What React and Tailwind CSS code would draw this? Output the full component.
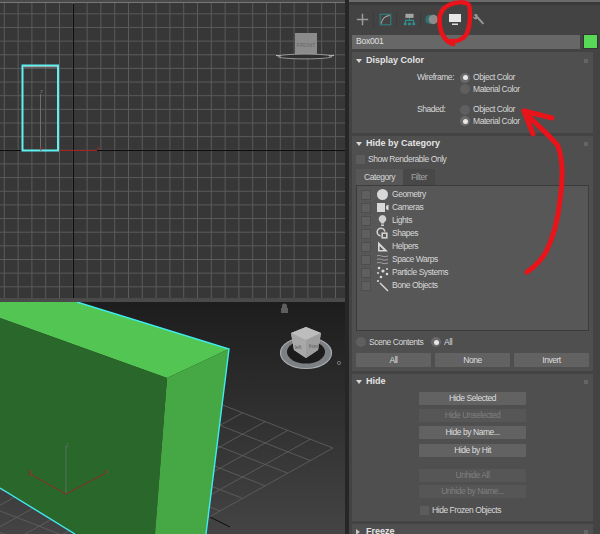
const font = { fontFamily: '"Liberation Sans", Arial, sans-serif' }

const range = (from, to) => Array.from({ length: to - from + 1 }, (_, i) => from + i)

const FrontViewport = () => (
  <svg width="345" height="295" viewBox="0 3 345 295" className="block bg-[#373737]">
    {range(-6, 20).map(k => (
      <line key={k} x1={73.3 + k * 13.8} y1="3" x2={73.3 + k * 13.8} y2="298" stroke="#5b5b5b" strokeWidth="1" />
    ))}
    {range(-11, 11).map(k => (
      <line key={k} x1="0" y1={150.3 + k * 13.65} x2="345" y2={150.3 + k * 13.65} stroke="#5b5b5b" strokeWidth="1" />
    ))}
    <line x1="73.5" y1="4" x2="73.5" y2="298" stroke="#0c0c0c" />
    <line x1="0" y1="150.5" x2="345" y2="150.5" stroke="#0c0c0c" />
    <rect x="22.5" y="65.5" width="35.5" height="85" fill="none" stroke="#5ff0f2" strokeWidth="2" />
    <line x1="24" y1="66.8" x2="57" y2="66.8" stroke="#c9c9c9" strokeWidth="0.8" />
    <line x1="40.5" y1="94" x2="40.5" y2="150" stroke="#6f6f6f" />
    <line x1="59" y1="150.5" x2="97" y2="150.5" stroke="#a82020" strokeWidth="1.2" />
    <text x="41.5" y="93" fontSize="5" textAnchor="middle" fill="#7c7c7c" style={font}>z</text>
    <text x="41.5" y="150" fontSize="6" textAnchor="middle" fill="#b02525" style={font}>y</text>
    <text x="98" y="150" fontSize="6" textAnchor="middle" fill="#b02525" style={font}>x</text>
    {/* view cube */}
    <rect x="295" y="33" width="22" height="22" fill="#8b8b8b" />
    <text x="306" y="46.5" fontSize="5.5" textAnchor="middle" fill="#666" style={font}>FRONT</text>
    <ellipse cx="305" cy="56.5" rx="27" ry="2.4" fill="#2f2f2f" stroke="#a0a0a0" strokeWidth="0.9" />
    <line x1="276" y1="55.5" x2="281" y2="56" stroke="#c4c4c4" />
    <line x1="329" y1="56" x2="334" y2="55.5" stroke="#c4c4c4" />
  </svg>
)

const PerspectiveViewport = () => {
  const corner = [333, 448]
  const u = [-22.6, -8.8]
  const v = [-22.6, 12.6]
  const pt = (a, b) => [corner[0] + a * u[0] + b * v[0], corner[1] + a * u[1] + b * v[1]]
  return (
    <svg width="345" height="232" viewBox="0 302 345 232" className="block">
      <defs>
        <linearGradient id="bg" x1="0" y1="0" x2="0" y2="1">
          <stop offset="0" stopColor="#1d1d1d" />
          <stop offset="1" stopColor="#444444" />
        </linearGradient>
      </defs>
      <rect x="0" y="302" width="345" height="232" fill="url(#bg)" />
      {range(0, 16).map(a => {
        const [x1, y1] = pt(a, 0)
        const [x2, y2] = pt(a, 12)
        return <line key={a} x1={x1} y1={y1} x2={x2} y2={y2} stroke="#626262" strokeWidth="0.8" />
      })}
      {range(0, 12).map(b => {
        const [x1, y1] = pt(0, b)
        const [x2, y2] = pt(16, b)
        return <line key={b} x1={x1} y1={y1} x2={x2} y2={y2} stroke="#626262" strokeWidth="0.8" />
      })}
      <line x1="210" y1="517" x2="230" y2="527" stroke="#0c0c0c" />
      {/* box */}
      <polygon points="0,302 77,302 229,349 167,378 0,318" fill="#52c552" />
      <polygon points="167,378 229,349 206,534 155,534" fill="#45a845" />
      <polygon points="0,318 167,378 155,534 76,534 0,488" fill="#2a672a" />
      <polyline points="77,302 229,349 206,534" fill="none" stroke="#3fecef" strokeWidth="1.4" />
      <line x1="0" y1="488" x2="75" y2="534" stroke="#3fecef" strokeWidth="1.4" />
      {/* tripod */}
      <line x1="66" y1="494" x2="66" y2="446" stroke="#4d6f4d" strokeWidth="1.4" />
      <line x1="66" y1="494" x2="30" y2="474" stroke="#8f2a22" />
      <line x1="66" y1="494" x2="104" y2="474" stroke="#8f2a22" />
      <text x="67" y="447" fontSize="7" textAnchor="middle" fill="#5d6b5d" style={font}>z</text>
      <text x="30" y="474" fontSize="7" textAnchor="middle" fill="#a22a22" style={font}>y</text>
      <text x="106" y="474" fontSize="7" textAnchor="middle" fill="#a22a22" style={font}>x</text>
      {/* view cube */}
      <path d="M282 308h5v-2a2.500 2.500 0 0 0-5 0zM281 308h7v5h-7z" fill="#5e5e5e" />
      <ellipse cx="306" cy="353" rx="25.500" ry="15.500" fill="#7c8084" stroke="#a9adb1" strokeWidth="1.200" />
      <ellipse cx="306" cy="352" rx="19" ry="11.500" fill="#1c1c1c" />
      <polygon points="306,327 321,333 318,350 306,358 294,350 291,333" fill="#b8b8b8" />
      <polygon points="306,327 321,333 306,340 291,333" fill="#bdbdbd" />
      <polygon points="291,333 306,340 306,358 294,350" fill="#a8a8a8" />
      <polygon points="321,333 306,340 306,358 318,350" fill="#9d9d9d" />
      <text x="298" y="349" fontSize="5" textAnchor="middle" fill="#5a5a5a" style={font}>left</text>
      <text x="314" y="348" fontSize="5" textAnchor="middle" fill="#5a5a5a" style={font}>front</text>
      <circle cx="339" cy="363" r="1.600" fill="none" stroke="#777" />
    </svg>
  )
}

const Radio = ({ on }) => (
  <span className={`w-[10px] h-[10px] rounded-full flex items-center justify-center shrink-0 ${on ? 'bg-[#6a6a6a]' : 'bg-[#5f5f5f]'}`}>
    {on && <span className="w-[5px] h-[5px] rounded-full bg-[#e8e8e8]" />}
  </span>
)

const Check = () => <span className="w-[9px] h-[9px] bg-[#5c5c5c] shrink-0 block" />

const RolloutHeader = ({ title, open = true }) => (
  <div className="flex items-center h-[15px] pl-[4px] pr-[5px] tracking-normal">
    {open ? (
      <span className="w-0 h-0 border-l-[3px] border-r-[3px] border-t-[4px] border-l-transparent border-r-transparent border-t-[#d5d5d5]" />
    ) : (
      <span className="w-0 h-0 border-t-[3px] border-b-[3px] border-l-[4px] border-t-transparent border-b-transparent border-l-[#c5c5c5]" />
    )}
    <span className={`${open ? 'ml-[4px]' : 'ml-[6px]'} font-bold text-[9px] text-[#e4e4e4]`}>{title}</span>
    <span className="ml-auto w-[4px] h-[4px] bg-[#656565]" />
  </div>
)

const ToolSep = () => <span className="w-px h-[17px] bg-[#3c3c3c] ml-[4px]" />

const Toolbar = () => (
  <div className="flex items-center h-[29px] pl-[7px]">
    <svg width="13" height="13" viewBox="0 0 16 16" stroke="#9c9c9c" strokeWidth="1.800"><path d="M8 1v14M1 8h14" /></svg>
    <ToolSep />
    <svg width="13" height="13" viewBox="0 0 16 16" fill="none" className="ml-[5px]">
      <rect x="1.500" y="1.500" width="13" height="13" stroke="#2f7f80" strokeWidth="1.400" />
      <path d="M3 13C3.500 7 8 3.500 13 3" stroke="#b5b5b5" strokeWidth="1.300" />
    </svg>
    <ToolSep />
    <svg width="13" height="13" viewBox="0 0 16 16" fill="none" className="ml-[6px]">
      <rect x="3" y="1" width="10" height="5" fill="#a5a5a5" />
      <path d="M8 6v3M3 13V9h10v4" stroke="#2f8f90" strokeWidth="1.400" />
      <rect x="1" y="12" width="3.500" height="3" fill="#2f8f90" />
      <rect x="6.200" y="12" width="3.500" height="3" fill="#2f8f90" />
      <rect x="11.500" y="12" width="3.500" height="3" fill="#2f8f90" />
    </svg>
    <ToolSep />
    <svg width="13" height="13" viewBox="0 0 16 16" className="ml-[4px]">
      <circle cx="6" cy="8" r="5.800" fill="#2f6f70" />
      <circle cx="10.200" cy="8" r="5.800" fill="#8c8c8c" />
    </svg>
    <svg width="14" height="13" viewBox="0 0 14 13" className="ml-[10px]">
      <rect x="1" y="1" width="12" height="8" fill="#e6e6e6" />
      <rect x="4" y="10.500" width="6" height="1.500" fill="#dcdcdc" />
    </svg>
    <svg width="13" height="13" viewBox="0 0 16 16" fill="none" className="ml-[10px]">
      <path d="M6 4.500l8 9" stroke="#989898" strokeWidth="2.400" />
      <path d="M7 2.400A3.500 3.500 0 0 0 2.300 2.500l2.200 2-1.200 1.400L1.200 4A3.500 3.500 0 0 0 6 7.500z" fill="#989898" />
    </svg>
  </div>
)

const rows = [
  ['Geometry', <circle key="g" cx="6.500" cy="6.500" r="5.500" fill="#d8d8d8" />],
  ['Cameras', <path key="c" d="M1 2h8v9H1zM10 5l2.500-1.500v6L10 8z" fill="#d8d8d8" />],
  ['Lights', <path key="l" d="M6.500 1a3.800 3.800 0 0 1 2 7L8 9.500H5L4.500 8a3.800 3.800 0 0 1 2-7zM5 10.500h3V12H5z" fill="#d0d0d0" />],
  ['Shapes', (
    <g key="s">
      <circle cx="5" cy="5" r="3.800" fill="none" stroke="#d0d0d0" strokeWidth="1.600" />
      <rect x="5" y="5" width="7" height="7" fill="#d0d0d0" stroke="#575757" strokeWidth="0.800" />
      <rect x="7" y="7" width="3" height="3" fill="#575757" />
    </g>
  )],
  ['Helpers', <path key="h" d="M2 1.500v10h10zM3.600 6v4h4z" fill="#d8d8d8" fillRule="evenodd" />],
  ['Space Warps', (
    <path key="w" d="M1 3c3-2 5 2 11 0M1 6.500c3-2 5 2 11 0M1 10c3-2 5 2 11 0" fill="none" stroke="#a9a9a9" strokeWidth="0.900" />
  )],
  ['Particle Systems', (
    <g key="p" fill="#d8d8d8">
      <circle cx="3" cy="2" r="1.300" />
      <circle cx="7" cy="5" r="1.600" />
      <circle cx="2" cy="7" r="1" />
      <circle cx="11" cy="3" r="1" />
      <circle cx="11" cy="8" r="1.300" />
      <circle cx="5" cy="11" r="1.300" />
    </g>
  )],
  ['Bone Objects', (
    <g key="b">
      <path d="M4 4l8 8" stroke="#d8d8d8" strokeWidth="1.500" />
      <circle cx="2" cy="2" r="1.100" fill="#d8d8d8" />
    </g>
  )],
]

const Btn = ({ children, dim, className = '' }) => (
  <div className={`flex items-center justify-center rounded-[1px] ${dim ? 'bg-[#565656] text-[#808080]' : 'bg-[#626262] text-[#dedede]'} ${className}`}>
    {children}
  </div>
)

const RadioLine = ({ on, children, className = '' }) => (
  <div className={`flex items-center gap-[3px] ${className}`}>
    <Radio on={on} />
    <span>{children}</span>
  </div>
)

const Panel = () => (
  <div className="w-[255px] h-[534px] bg-[#434343] border-l-[4px] border-[#262626] shrink-0 relative overflow-hidden text-[8.5px] tracking-[-0.45px] text-[#d8d8d8]">
    <div className="h-[5px] bg-[#3a3a3a] border-t-[2px] border-[#6b6b6b]" />
    <Toolbar />
    <div className="flex items-center gap-[3px] mb-[3px] h-[15px] ml-[3px]">
      <div className="w-[228px] h-[14px] bg-[#676767] flex items-center pl-[4px] tracking-[-0.2px] text-[#e0e0e0]">Box001</div>
      <div className="w-[15px] h-[15px] bg-[#57d957] border border-[#333]" />
    </div>

    <div className="ml-[3px] w-[241px] flex flex-col gap-[3px]">
      <div className="bg-[#4f4f4f] h-[81px] pt-[1px]">
        <RolloutHeader title="Display Color" />
        <div className="grid grid-cols-[108px_auto] mt-[4px] leading-[11.5px]">
          <div className="pl-[65px]">Wireframe:</div>
          <RadioLine on>Object Color</RadioLine>
          <div />
          <RadioLine>Material Color</RadioLine>
          <div className="h-[9px]" />
          <div className="h-[9px]" />
          <div className="pl-[65px]">Shaded:</div>
          <RadioLine>Object Color</RadioLine>
          <div />
          <RadioLine on>Material Color</RadioLine>
        </div>
      </div>

      <div className="bg-[#4f4f4f] h-[235px]">
        <RolloutHeader title="Hide by Category" />
        <div className="flex items-center gap-[3px] pl-[4px] mt-[2px] h-[13px]">
          <Check />
          <span>Show Renderable Only</span>
        </div>
        <div className="flex ml-[4px] mt-[3px] h-[16px] items-stretch">
          <div className="w-[47px] bg-[#575757] flex items-center justify-center">Category</div>
          <div className="w-[32px] bg-[#484848] flex items-center justify-center text-[#a5a5a5]">Filter</div>
        </div>
        <div className="mx-[4px] h-[146px] bg-[#575757] border border-[#3c3c3c] pt-[2px] pl-[4px]">
          {rows.map(([label, icon]) => (
            <div key={label} className="flex items-center h-[13px]">
              <span className="w-[10px] h-[10px] bg-[#5f5f5f] border border-[#4e4e4e] block shrink-0" />
              <svg width="13" height="13" viewBox="0 0 13 13" className="ml-[5px] shrink-0">{icon}</svg>
              <span className="ml-[3px]">{label}</span>
            </div>
          ))}
        </div>
        <div className="flex items-center pl-[4px] h-[22px]">
          <RadioLine className="w-[75px]">Scene Contents</RadioLine>
          <RadioLine on>All</RadioLine>
        </div>
        <div className="grid grid-cols-3 gap-[4px] mx-[4px] h-[14px]">
          <Btn>All</Btn>
          <Btn>None</Btn>
          <Btn>Invert</Btn>
        </div>
      </div>

      <div className="bg-[#4f4f4f] h-[147px]">
        <RolloutHeader title="Hide" />
        <div className="w-[107px] ml-[67px] mt-[3px] flex flex-col">
          <Btn className="h-[13px]">Hide Selected</Btn>
          <Btn dim className="h-[13px] mt-[4px]">Hide Unselected</Btn>
          <Btn className="h-[13px] mt-[4px]">Hide by Name...</Btn>
          <Btn className="h-[13px] mt-[5px]">Hide by Hit</Btn>
          <Btn dim className="h-[13px] mt-[12px]">Unhide All</Btn>
          <Btn dim className="h-[13px] mt-[3px]">Unhide by Name...</Btn>
          <div className="flex items-center gap-[3px] mt-[6px] pl-[1px]">
            <Check />
            <span>Hide Frozen Objects</span>
          </div>
        </div>
      </div>

      <div className="bg-[#4f4f4f] h-[15px]">
        <RolloutHeader title="Freeze" open={false} />
      </div>
    </div>
  </div>
)

// hand drawn marks on top of the screenshot
const RedMarks = () => (
  <svg width="600" height="534" className="absolute inset-0 pointer-events-none" fill="none" stroke="#e8141a" strokeLinecap="round" strokeLinejoin="round">
    <path d="M453 44C447 42 441 36 440 26C438 14 442 8 449 5C455 2 465 1 469 5C471 14 470 28 466 35C462 40 456 42 451 41" strokeWidth="4.500" />
    <path d="M552 118L524 111L533 134" strokeWidth="5" />
    <path d="M524 111C535 124 550 135 558 146C563 160 563 180 560 200C558 220 553 238 546 252C540 262 533 268 527 272" strokeWidth="5" />
  </svg>
)

export default function App() {
  return (
    <div className="relative w-[600px] h-[534px] flex overflow-hidden bg-[#333]" style={font}>
      <div className="w-[345px] shrink-0 flex flex-col">
        <div className="h-[3px] bg-[#777] border-t-[2px] border-[#4a4a4a]" />
        <FrontViewport />
        <div className="h-[4px] bg-[#4a4a4a]" />
        <PerspectiveViewport />
      </div>
      <Panel />
      <RedMarks />
    </div>
  )
}
